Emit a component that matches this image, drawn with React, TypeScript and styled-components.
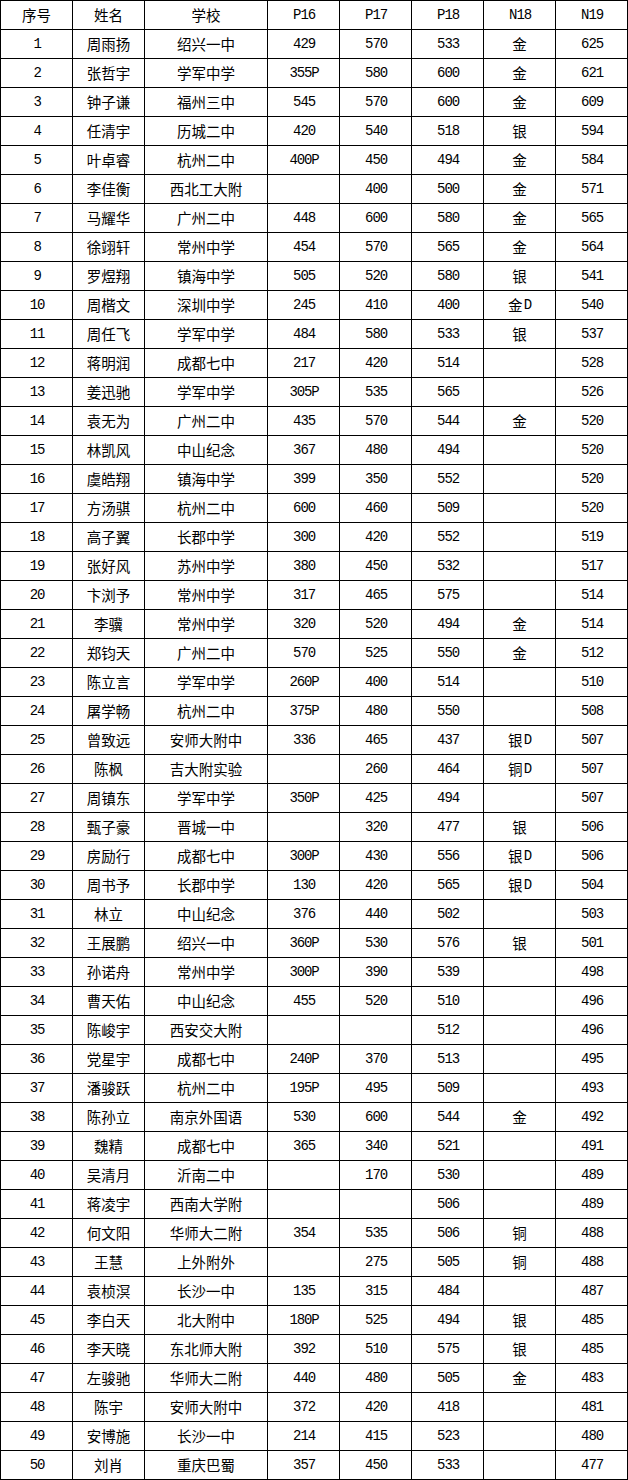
import React from "react";
import styled, { createGlobalStyle } from "styled-components";

const GlobalStyle = createGlobalStyle`
  html, body {
    margin: 0;
    padding: 0;
    background: #ffffff;
  }
`;

const Grid = styled.div`
  display: grid;
  grid-template-columns: 71px 71px 122px 71px 71px 71px 71px 71px;
  grid-auto-rows: 28px;
  gap: 1px;
  padding: 1px;
  width: 628px;
  box-sizing: border-box;
  background: #000000;
`;

const Cell = styled.div`
  display: flex;
  align-items: center;
  justify-content: center;
  background: #ffffff;
  color: #000000;
  font-family: "Noto Sans CJK SC", "Liberation Sans", sans-serif;
  font-size: 14.5px;
  line-height: 1;
  white-space: nowrap;
`;

const Han = styled.span`
  font-family: "Noto Sans CJK SC", sans-serif;
  font-size: 14.5px;
`;

const Latin = styled.span`
  font-family: "Liberation Mono", "DejaVu Sans Mono", monospace;
  font-size: 14px;
  letter-spacing: -1.1px;
  padding-left: 1.1px;
`;

const headers = ["序号", "姓名", "学校", "P16", "P17", "P18", "N18", "N19"];

// 姓名, 学校, P16, P17, P18, N18, N19
const rows: string[][] = [
  ["周雨扬", "绍兴一中", "429", "570", "533", "金", "625"],
  ["张哲宇", "学军中学", "355P", "580", "600", "金", "621"],
  ["钟子谦", "福州三中", "545", "570", "600", "金", "609"],
  ["任清宇", "历城二中", "420", "540", "518", "银", "594"],
  ["叶卓睿", "杭州二中", "400P", "450", "494", "金", "584"],
  ["李佳衡", "西北工大附", "", "400", "500", "金", "571"],
  ["马耀华", "广州二中", "448", "600", "580", "金", "565"],
  ["徐翊轩", "常州中学", "454", "570", "565", "金", "564"],
  ["罗煜翔", "镇海中学", "505", "520", "580", "银", "541"],
  ["周楷文", "深圳中学", "245", "410", "400", "金D", "540"],
  ["周任飞", "学军中学", "484", "580", "533", "银", "537"],
  ["蒋明润", "成都七中", "217", "420", "514", "", "528"],
  ["姜迅驰", "学军中学", "305P", "535", "565", "", "526"],
  ["袁无为", "广州二中", "435", "570", "544", "金", "520"],
  ["林凯风", "中山纪念", "367", "480", "494", "", "520"],
  ["虞皓翔", "镇海中学", "399", "350", "552", "", "520"],
  ["方汤骐", "杭州二中", "600", "460", "509", "", "520"],
  ["高子翼", "长郡中学", "300", "420", "552", "", "519"],
  ["张好风", "苏州中学", "380", "450", "532", "", "517"],
  ["卞浏予", "常州中学", "317", "465", "575", "", "514"],
  ["李骥", "常州中学", "320", "520", "494", "金", "514"],
  ["郑钧天", "广州二中", "570", "525", "550", "金", "512"],
  ["陈立言", "学军中学", "260P", "400", "514", "", "510"],
  ["屠学畅", "杭州二中", "375P", "480", "550", "", "508"],
  ["曾致远", "安师大附中", "336", "465", "437", "银D", "507"],
  ["陈枫", "吉大附实验", "", "260", "464", "铜D", "507"],
  ["周镇东", "学军中学", "350P", "425", "494", "", "507"],
  ["甄子豪", "晋城一中", "", "320", "477", "银", "506"],
  ["房励行", "成都七中", "300P", "430", "556", "银D", "506"],
  ["周书予", "长郡中学", "130", "420", "565", "银D", "504"],
  ["林立", "中山纪念", "376", "440", "502", "", "503"],
  ["王展鹏", "绍兴一中", "360P", "530", "576", "银", "501"],
  ["孙诺舟", "常州中学", "300P", "390", "539", "", "498"],
  ["曹天佑", "中山纪念", "455", "520", "510", "", "496"],
  ["陈峻宇", "西安交大附", "", "", "512", "", "496"],
  ["党星宇", "成都七中", "240P", "370", "513", "", "495"],
  ["潘骏跃", "杭州二中", "195P", "495", "509", "", "493"],
  ["陈孙立", "南京外国语", "530", "600", "544", "金", "492"],
  ["魏精", "成都七中", "365", "340", "521", "", "491"],
  ["吴清月", "沂南二中", "", "170", "530", "", "489"],
  ["蒋凌宇", "西南大学附", "", "", "506", "", "489"],
  ["何文阳", "华师大二附", "354", "535", "506", "铜", "488"],
  ["王慧", "上外附外", "", "275", "505", "铜", "488"],
  ["袁桢溟", "长沙一中", "135", "315", "484", "", "487"],
  ["李白天", "北大附中", "180P", "525", "494", "银", "485"],
  ["李天晓", "东北师大附", "392", "510", "575", "银", "485"],
  ["左骏驰", "华师大二附", "440", "480", "505", "金", "483"],
  ["陈宇", "安师大附中", "372", "420", "418", "", "481"],
  ["安博施", "长沙一中", "214", "415", "523", "", "480"],
  ["刘肖", "重庆巴蜀", "357", "450", "533", "", "477"],
];

// split text into runs of CJK and latin characters
const Text = ({ value }: { value: string }) => {
  const parts = value.match(/[\u4e00-\u9fff]+|[^\u4e00-\u9fff]+/g) || [];
  return (
    <>
      {parts.map((p, i) =>
        /[\u4e00-\u9fff]/.test(p) ? <Han key={i}>{p}</Han> : <Latin key={i}>{p}</Latin>
      )}
    </>
  );
};

export default function App() {
  return (
    <>
      <GlobalStyle />
      <Grid>
        {headers.map((h) => (
          <Cell key={h}>
            <Text value={h} />
          </Cell>
        ))}
        {rows.map((r, i) => (
          <React.Fragment key={i}>
            <Cell>
              <Text value={String(i + 1)} />
            </Cell>
            {r.map((v, j) => (
              <Cell key={j}>
                <Text value={v} />
              </Cell>
            ))}
          </React.Fragment>
        ))}
      </Grid>
    </>
  );
}
